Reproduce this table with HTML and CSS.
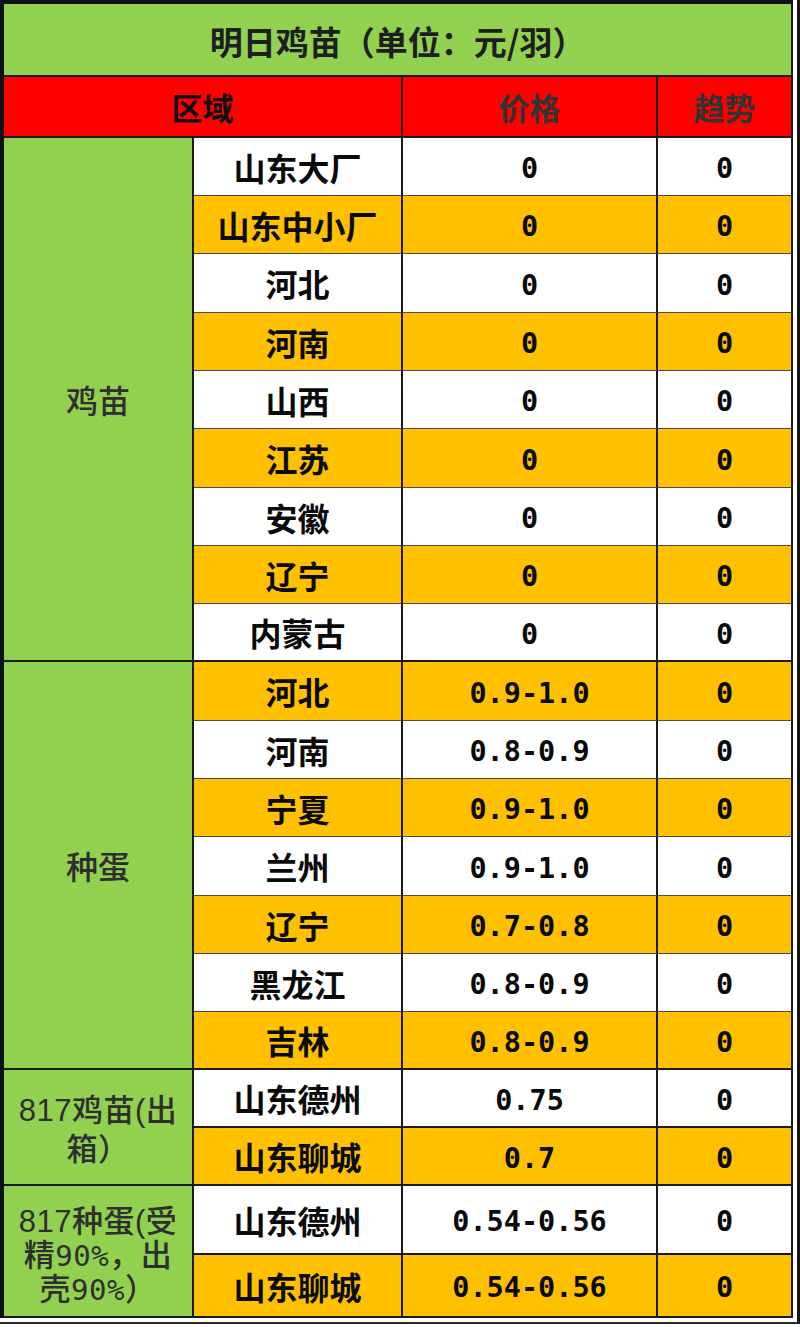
FILE: index.html
```html
<!DOCTYPE html>
<html lang="zh-CN">
<head>
<meta charset="utf-8">
<title>明日鸡苗</title>
<link rel="stylesheet" href="styles.css">
</head>
<body>
<div class="frame">
<table class="sheet">
  <colgroup>
    <col class="c1"><col class="c2"><col class="c3"><col class="c4">
  </colgroup>
  <thead>
    <tr class="title-row"><th colspan="4" class="title">明日鸡苗（单位：元/羽）</th></tr>
    <tr class="head-row">
      <th colspan="2" class="h-area">区域</th>
      <th class="h-sub">价格</th>
      <th class="h-sub">趋势</th>
    </tr>
  </thead>
  <tbody>
    <tr class="r"><td rowspan="9" class="group">鸡苗</td><td class="name">山东大厂</td><td class="num">0</td><td class="num">0</td></tr>
    <tr class="r alt"><td class="name">山东中小厂</td><td class="num">0</td><td class="num">0</td></tr>
    <tr class="r tall"><td class="name">河北</td><td class="num">0</td><td class="num">0</td></tr>
    <tr class="r alt"><td class="name">河南</td><td class="num">0</td><td class="num">0</td></tr>
    <tr class="r"><td class="name">山西</td><td class="num">0</td><td class="num">0</td></tr>
    <tr class="r alt tall"><td class="name">江苏</td><td class="num">0</td><td class="num">0</td></tr>
    <tr class="r"><td class="name">安徽</td><td class="num">0</td><td class="num">0</td></tr>
    <tr class="r alt"><td class="name">辽宁</td><td class="num">0</td><td class="num">0</td></tr>
    <tr class="r last"><td class="name">内蒙古</td><td class="num">0</td><td class="num">0</td></tr>

    <tr class="r alt tall"><td rowspan="7" class="group">种蛋</td><td class="name">河北</td><td class="num">0.9-1.0</td><td class="num">0</td></tr>
    <tr class="r"><td class="name">河南</td><td class="num">0.8-0.9</td><td class="num">0</td></tr>
    <tr class="r alt"><td class="name">宁夏</td><td class="num">0.9-1.0</td><td class="num">0</td></tr>
    <tr class="r tall"><td class="name">兰州</td><td class="num">0.9-1.0</td><td class="num">0</td></tr>
    <tr class="r alt"><td class="name">辽宁</td><td class="num">0.7-0.8</td><td class="num">0</td></tr>
    <tr class="r"><td class="name">黑龙江</td><td class="num">0.8-0.9</td><td class="num">0</td></tr>
    <tr class="r alt last"><td class="name">吉林</td><td class="num">0.8-0.9</td><td class="num">0</td></tr>

    <tr class="r dark"><td rowspan="2" class="group multi g817a">817鸡苗(出<br>箱）</td><td class="name">山东德州</td><td class="num">0.75</td><td class="num">0</td></tr>
    <tr class="r alt dark"><td class="name">山东聊城</td><td class="num">0.7</td><td class="num">0</td></tr>

    <tr class="r dark big1"><td rowspan="2" class="group multi g817b">817种蛋(受<br>精<span class="pct">90%</span>，出<br>壳<span class="pct">90%</span>）</td><td class="name">山东德州</td><td class="num">0.54-0.56</td><td class="num">0</td></tr>
    <tr class="r alt dark big2"><td class="name">山东聊城</td><td class="num">0.54-0.56</td><td class="num">0</td></tr>
  </tbody>
</table>
</div>
</body>
</html>
```

FILE: styles.css
```css
* { box-sizing: border-box; }

html, body {
  margin: 0;
  padding: 0;
  background: #ffffff;
}

.frame {
  width: 800px;
  padding: 0 4px 4px 0;
  border-right: 3px solid #161616;
  border-bottom: 2px solid #2a2a2a;
}

.sheet {
  width: 100%;
  table-layout: fixed;
  border-collapse: separate;
  border-spacing: 0;
  border-left: 4px solid #111;
  border-top: 4px solid #111;
  font-family: "Noto Sans CJK SC", "Noto Sans", sans-serif;
}

.c1 { width: 190px; }
.c2 { width: 209px; }
.c3 { width: 255px; }
.c4 { width: 135px; }

th, td {
  padding: 0;
  text-align: center;
  vertical-align: middle;
  border-right: 2px solid #1a1a1a;
  border-bottom: 1px solid #4a4a5a;
}

.title-row th {
  height: 73px;
  padding-top: 2px;
  background: #92d050;
  color: #1e1e1e;
  font-size: 33px;
  font-weight: 700;
  border-bottom: 2px solid #1a1a1a;
}

.head-row th {
  height: 61px;
  background: #ff0000;
  font-size: 31px;
  font-weight: 700;
  border-bottom: 2px solid #1a1a1a;
}

.h-area { color: #111; }
.h-sub { color: #333333; }

.r td { height: 58px; background: #ffffff; }
.r.tall td { height: 59px; }
.r.alt td { background: #ffc000; }

.r.last td, .r.dark td { border-bottom: 2px solid #1a1a1a; }
.r.big1 td { height: 69px; }
.r.big2 td { height: 63px; }

tr.r td.group {
  background: #92d050;
  color: #2e2e2e;
  font-size: 32px;
  font-weight: 500;
  border-bottom: 2px solid #1a1a1a;
}

tr.r td.multi {
  font-family: "Liberation Sans", "Noto Sans CJK SC", sans-serif;
  font-size: 31px;
  letter-spacing: 0.5px;
}

tr.r td.g817a { line-height: 39px; padding-top: 6px; }
tr.r td.g817b { line-height: 34px; padding-top: 10px; }

.pct {
  font-family: "DejaVu Sans Mono", "Liberation Mono", monospace;
  font-size: 29px;
}

.name {
  color: #0a0a0a;
  font-size: 32px;
  font-weight: 700;
}

.num {
  padding-top: 4px;
  color: #0a0a0a;
  font-family: "DejaVu Sans Mono", "Liberation Mono", monospace;
  font-size: 28.5px;
  font-weight: 700;
}
```
